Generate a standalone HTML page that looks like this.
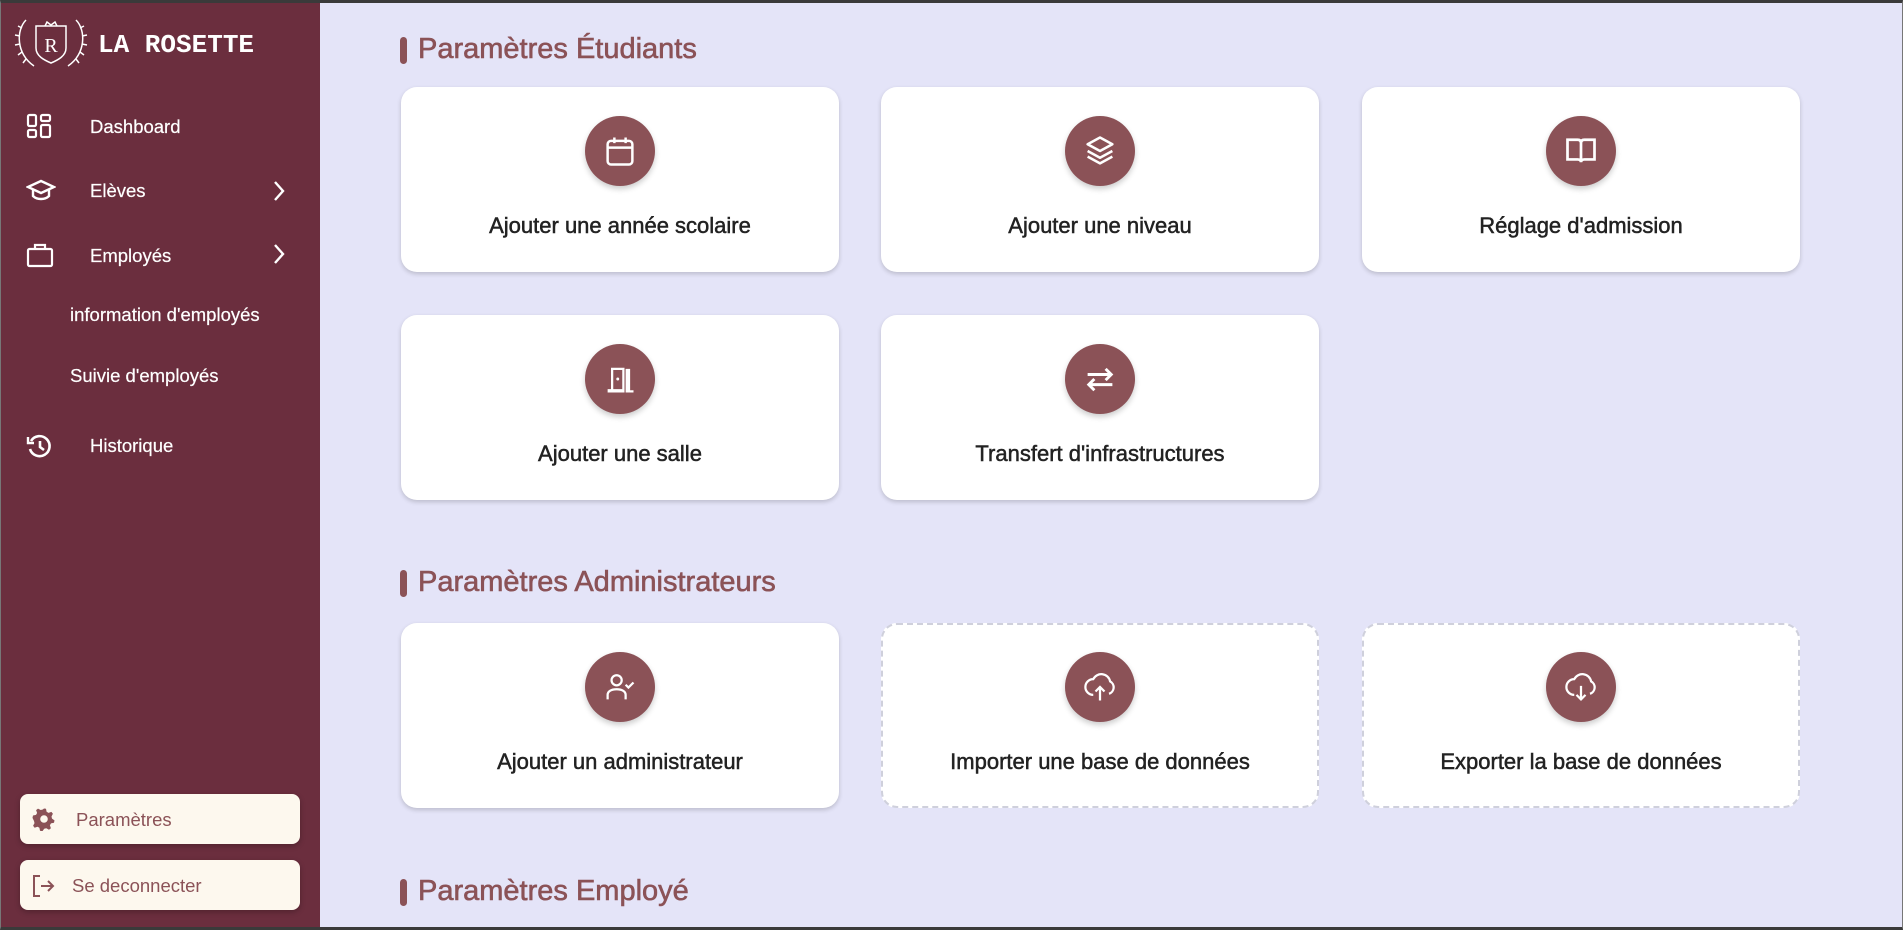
<!DOCTYPE html>
<html><head><meta charset="utf-8"><style>
*{box-sizing:border-box;margin:0;padding:0}
body{width:1903px;height:930px;overflow:hidden;background:#e4e4f8;font-family:"Liberation Sans",sans-serif;position:relative}
.frame{position:absolute;inset:0;border:1px solid #777;border-top:3px solid #3a3a3a;border-bottom:3px solid #3a3a3a;pointer-events:none;z-index:10}
.side{position:absolute;left:0;top:0;width:320px;height:930px;background:#6b2e3e;color:#fff}
.logo{position:absolute;left:98px;top:30px;font-family:"Liberation Mono",monospace;font-size:26px;font-weight:bold;letter-spacing:0px}
.nav{position:absolute;left:90px;font-size:18.5px;-webkit-text-stroke:0.2px #fff}
.sub{position:absolute;left:70px;font-size:18.5px;-webkit-text-stroke:0.2px #fff}
.ico{position:absolute;left:26px}
.chev{position:absolute;left:272px}
.btn{position:absolute;left:20px;width:280px;height:50px;background:#fdf8ee;border-radius:8px;color:#8b5257;font-size:18.5px;box-shadow:0 2px 6px rgba(0,0,0,.25)}
.btn span{position:absolute;top:15px}
.btn svg{position:absolute;top:13px}
h2{position:absolute;left:418px;font-size:29px;font-weight:normal;color:#8b5257;-webkit-text-stroke:0.6px #8b5257}
h2:before{content:"";position:absolute;left:-18px;top:4px;width:7px;height:27px;border-radius:4px;background:#8b5257;-webkit-text-stroke:0}
.card{position:absolute;width:438px;height:185px;background:#fff;border-radius:16px;box-shadow:0 2px 5px rgba(0,0,0,.18)}
.card.d{border:2px dashed #cfd0dc;box-shadow:none}
.circ{position:absolute;left:184px;top:29px;width:70px;height:70px;border-radius:50%;background:#8b5257;box-shadow:0 3px 6px rgba(0,0,0,.2);display:flex;align-items:center;justify-content:center}
.card.d .circ{left:182px;top:27px}
.lab{position:absolute;left:0;right:0;top:126px;text-align:center;font-size:22px;color:#222;-webkit-text-stroke:0.5px #222}
.card.d .lab{top:124px}
</style></head><body>
<div class="frame"></div>
<div class="side">
<svg style="position:absolute;left:14px;top:16px" width="74" height="54" viewBox="0 0 74 54" fill="none" stroke="#fff" stroke-width="1.5">
<path d="M12 4 C2 14 2 38 20 50"/><path d="M62 4 C72 14 72 38 54 50"/>
<path d="M8 12l-4-2M6 20l-5-1M6 28l-5 1M8 36l-4 3M12 43l-3 4"/>
<path d="M66 12l4-2M68 20l5-1M68 28l5 1M66 36l4 3M62 43l3 4"/>
<path d="M22 10h30v22c0 8-8 12-15 15c-7-3-15-7-15-15z"/>
<text x="37" y="36" fill="#fff" stroke="none" font-family="Liberation Serif" font-size="20" text-anchor="middle">R</text>
<path d="M31 10l2-4 4 3 4-3 2 4"/>
</svg>
<div class="logo">LA ROSETTE</div>
<svg class="ico" style="top:113px" width="26" height="26" viewBox="0 0 26 26" fill="none" stroke="#fff" stroke-width="2.2"><rect x="2" y="2" width="8" height="11" rx="1.5"/><rect x="15" y="2" width="9" height="6" rx="1.5"/><rect x="2" y="17" width="8" height="7" rx="1.5"/><rect x="15" y="12" width="9" height="12" rx="1.5"/></svg>
<div class="nav" style="top:116px">Dashboard</div>
<svg class="ico" style="top:178px" width="30" height="24" viewBox="0 0 30 24" fill="none" stroke="#fff" stroke-width="2.4"><path d="M2 9l13-6 13 6-13 6z"/><path d="M7 12v6c4 4 12 4 16 0v-6"/></svg>
<div class="nav" style="top:180px">Elèves</div>
<svg class="chev" style="top:180px" width="14" height="22" viewBox="0 0 14 22" fill="none" stroke="#fff" stroke-width="2.4"><path d="M3 2l8 9-8 9"/></svg>
<svg class="ico" style="top:242px" width="28" height="26" viewBox="0 0 28 26" fill="none" stroke="#fff" stroke-width="2.2"><rect x="2" y="7" width="24" height="17" rx="1.5"/><path d="M9 7V3h10v4"/></svg>
<div class="nav" style="top:245px">Employés</div>
<svg class="chev" style="top:243px" width="14" height="22" viewBox="0 0 14 22" fill="none" stroke="#fff" stroke-width="2.4"><path d="M3 2l8 9-8 9"/></svg>
<div class="sub" style="top:304px">information d'employés</div>
<div class="sub" style="top:365px">Suivie d'employés</div>
<svg class="ico" style="top:433px" width="26" height="26" viewBox="0 0 26 26" fill="none" stroke="#fff" stroke-width="2.6"><path d="M5 8a10 10 0 1 1-1 8"/><path d="M2 4v6h6" stroke-width="2.4"/><path d="M14 8v6l4 3"/></svg>
<div class="nav" style="top:435px">Historique</div>
<div class="btn" style="top:794px"><svg style="left:12px" width="24" height="24" viewBox="0 0 24 24"><path fill="#8b5257" d="M12 1.5l2 .3.6 3 1.9 1.1 2.9-1 1.5 1.9-1.4 2.7.5 2.1 2.5 1.8-.5 2.4-3 .6-1.1 1.9 1 2.9-1.9 1.5-2.7-1.4-2.1.5-1.8 2.5-2.4-.5-.6-3-1.9-1.1-2.9 1-1.5-1.9 1.4-2.7-.5-2.1L.5 10.9l.5-2.4 3-.6 1.1-1.9-1-2.9 1.9-1.5 2.7 1.4 2.1-.5z"/><circle cx="12" cy="12" r="3.8" fill="#fdf8ee"/></svg><span style="left:56px">Paramètres</span></div>
<div class="btn" style="top:860px"><svg style="left:10px" width="26" height="26" viewBox="0 0 26 26" fill="none" stroke="#8b5257" stroke-width="2"><path d="M10 3H4v20h6"/><path d="M11 13h12M18 8l5 5-5 5"/></svg><span style="left:52px">Se deconnecter</span></div>
</div>

<h2 style="top:33px">Paramètres Étudiants</h2>
<div class="card" style="left:401px;top:87px"><div class="circ"><svg width="36" height="36" viewBox="0 0 32 32" fill="none" stroke="#fff" stroke-width="2.2"><rect x="5" y="7" width="22" height="21" rx="3"/><path d="M5 13h22M11 4v5M21 4v5"/></svg></div><div class="lab">Ajouter une année scolaire</div></div>
<div class="card" style="left:881px;top:87px"><div class="circ"><svg width="36" height="36" viewBox="0 0 32 32" fill="none" stroke="#fff" stroke-width="2.2" stroke-linejoin="round"><path d="M16 4l11 6-11 6-11-6z"/><path d="M5 16l11 6 11-6M5 21l11 6 11-6"/></svg></div><div class="lab">Ajouter une niveau</div></div>
<div class="card" style="left:1362px;top:87px"><div class="circ"><svg width="36" height="36" viewBox="0 0 32 32" fill="none" stroke="#fff" stroke-width="2.4"><path d="M4 6h9c2 0 3 1 3 3v17c0-1.5-1-2.5-3-2.5H4zM28 6h-9c-2 0-3 1-3 3v17c0-1.5 1-2.5 3-2.5h9z"/></svg></div><div class="lab">Réglage d'admission</div></div>
<div class="card" style="left:401px;top:315px"><div class="circ"><svg width="36" height="36" viewBox="0 0 32 32" fill="#fff"><path d="M8 6h12v20H8zM21 7h4v19h3v2h-7z"/><rect x="5" y="25" width="15" height="3"/><path d="M10 8h8v17h-8z" fill="#8b5257"/><circle cx="14" cy="16" r="1.3"/></svg></div><div class="lab">Ajouter une salle</div></div>
<div class="card" style="left:881px;top:315px"><div class="circ"><svg width="36" height="36" viewBox="0 0 32 32" fill="none" stroke="#fff" stroke-width="2.6"><path d="M5 12h21M21 7l5 5-5 5M27 21H6M11 16l-5 5 5 5"/></svg></div><div class="lab">Transfert d'infrastructures</div></div>

<h2 style="top:566px">Paramètres Administrateurs</h2>
<div class="card" style="left:401px;top:623px"><div class="circ"><svg width="36" height="36" viewBox="0 0 32 32" fill="none" stroke="#fff" stroke-width="2"><circle cx="13" cy="10" r="4.5"/><path d="M5 27v-4c0-3 3-5 8-5s8 2 8 5v4"/><path d="M21 14l2.5 2.5L28 12"/></svg></div><div class="lab">Ajouter un administrateur</div></div>
<div class="card d" style="left:881px;top:623px"><div class="circ"><svg width="36" height="36" viewBox="0 0 32 32" fill="none" stroke="#fff" stroke-width="2"><path d="M10 23a7 7 0 0 1 0-14 8 8 0 0 1 15 2 6 6 0 0 1-1 11"/><path d="M16 28V16M12 20l4-4 4 4"/></svg></div><div class="lab">Importer une base de données</div></div>
<div class="card d" style="left:1362px;top:623px"><div class="circ"><svg width="36" height="36" viewBox="0 0 32 32" fill="none" stroke="#fff" stroke-width="2"><path d="M10 23a7 7 0 0 1 0-14 8 8 0 0 1 15 2 6 6 0 0 1-1 11"/><path d="M16 15v12M12 23l4 4 4-4"/></svg></div><div class="lab">Exporter la base de données</div></div>

<h2 style="top:875px">Paramètres Employé</h2>
</body></html>
